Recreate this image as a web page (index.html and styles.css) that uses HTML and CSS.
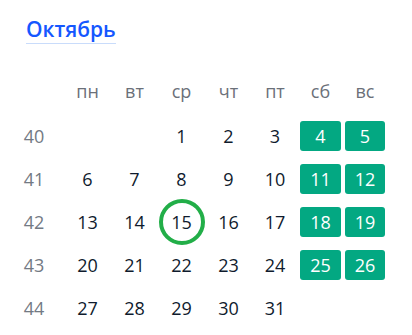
FILE: index.html
```html
<!DOCTYPE html>
<html lang="ru">
<head>
<meta charset="utf-8">
<link rel="stylesheet" href="styles.css">
</head>
<body>
<div class="cal">
  <div class="head"><span class="month">Октябрь</span></div>
  <div class="grid">
    <div class="wk"></div>
    <div class="dh">пн</div><div class="dh">вт</div><div class="dh">ср</div><div class="dh">чт</div><div class="dh">пт</div><div class="dh">сб</div><div class="dh">вс</div>

    <div class="wk">40</div>
    <div class="d"></div><div class="d"></div><div class="d">1</div><div class="d">2</div><div class="d">3</div><div class="d"><span class="box">4</span></div><div class="d"><span class="box">5</span></div>

    <div class="wk">41</div>
    <div class="d">6</div><div class="d">7</div><div class="d">8</div><div class="d">9</div><div class="d">10</div><div class="d"><span class="box">11</span></div><div class="d"><span class="box">12</span></div>

    <div class="wk">42</div>
    <div class="d">13</div><div class="d">14</div><div class="d"><span class="ring">15</span></div><div class="d">16</div><div class="d">17</div><div class="d"><span class="box">18</span></div><div class="d"><span class="box">19</span></div>

    <div class="wk">43</div>
    <div class="d">20</div><div class="d">21</div><div class="d">22</div><div class="d">23</div><div class="d">24</div><div class="d"><span class="box">25</span></div><div class="d"><span class="box">26</span></div>

    <div class="wk">44</div>
    <div class="d">27</div><div class="d">28</div><div class="d">29</div><div class="d">30</div><div class="d">31</div><div class="d"></div><div class="d"></div>
  </div>
</div>
</body>
</html>
```
FILE: styles.css
```css
html, body {
  margin: 0;
  padding: 0;
  background: #ffffff;
}
body {
  font-family: "Open Sans", "Noto Sans", sans-serif;
  color: #0f1b2d;
}
.cal {
  padding: 16px 0 0 4px;
}
.head {
  padding-left: 22px;
  height: 55px;
}
.month {
  display: inline-block;
  font-size: 21px;
  font-weight: 600;
  line-height: 26px;
  color: #1557ff;
  border-bottom: 1px solid #c9dcfb;
  padding-bottom: 1px;
}
.grid {
  display: grid;
  grid-template-columns: 60px 47px 47px 47px 47px 46px 45px 44px;
  grid-auto-rows: 43px;
  align-items: center;
  justify-items: center;
  font-size: 18px;
}
.dh {
  color: #6b7079;
  font-size: 18px;
  margin-bottom: 4px;
}
.wk {
  color: #737a84;
}
.d {
  display: flex;
  align-items: center;
  justify-content: center;
  width: 100%;
  height: 100%;
}
.box {
  display: flex;
  align-items: center;
  justify-content: center;
  width: 40px;
  height: 30px;
  border-radius: 3px;
  background: #03a882;
  color: #ffffff;
}
.grid > .d:nth-child(8n+7) .box {
  width: 41px;
}
.ring {
  display: flex;
  align-items: center;
  justify-content: center;
  width: 46px;
  height: 46px;
  box-sizing: border-box;
  border: 4px solid #22ae48;
  border-radius: 50%;
  flex: none;
}
```
